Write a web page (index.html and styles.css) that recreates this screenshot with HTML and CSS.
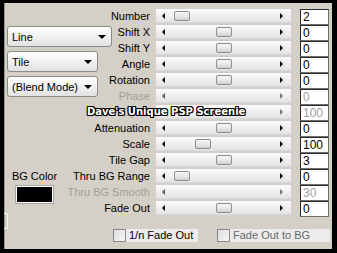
FILE: index.html
```html
<!DOCTYPE html>
<html lang="en">
<head>
    <meta charset="UTF-8">
    <title>Kaleidoscope settings</title>
    <link rel="stylesheet" href="styles.css">
</head>
<body>
    <div class="panel">
        <div class="main">
            <div class="side">
                <div class="combo wide"><span>Line</span><i class="caret"></i></div>
                <div class="combo"><span>Tile</span><i class="caret"></i></div>
                <div class="combo"><span>(Blend Mode)</span><i class="caret"></i></div>
                <div class="bgcolor">
                    <div class="bg-label">BG Color</div>
                    <div class="swatch"></div>
                </div>
                <div class="stub"></div>
            </div>
            <div class="params">
                <div class="row">
                    <div class="label">Number</div>
                    <div class="track"><i class="arr-l"></i><span class="thumb" style="left:18px"></span><i class="arr-r"></i></div>
                    <div class="value">2</div>
                </div>
                <div class="row">
                    <div class="label">Shift X</div>
                    <div class="track"><i class="arr-l"></i><span class="thumb" style="left:60px"></span><i class="arr-r"></i></div>
                    <div class="value">0</div>
                </div>
                <div class="row">
                    <div class="label">Shift Y</div>
                    <div class="track"><i class="arr-l"></i><span class="thumb" style="left:60px"></span><i class="arr-r"></i></div>
                    <div class="value">0</div>
                </div>
                <div class="row">
                    <div class="label">Angle</div>
                    <div class="track"><i class="arr-l"></i><span class="thumb" style="left:60px"></span><i class="arr-r"></i></div>
                    <div class="value">0</div>
                </div>
                <div class="row">
                    <div class="label">Rotation</div>
                    <div class="track"><i class="arr-l"></i><span class="thumb" style="left:60px"></span><i class="arr-r"></i></div>
                    <div class="value">0</div>
                </div>
                <div class="row disabled">
                    <div class="label">Phase</div>
                    <div class="track"><i class="arr-l"></i><i class="arr-r"></i></div>
                    <div class="value">0</div>
                </div>
                <div class="row disabled">
                    <div class="label">Cycle</div>
                    <div class="track"><i class="arr-l"></i><i class="arr-r"></i></div>
                    <div class="value">100</div>
                </div>
                <div class="row">
                    <div class="label">Attenuation</div>
                    <div class="track"><i class="arr-l"></i><span class="thumb" style="left:60px"></span><i class="arr-r"></i></div>
                    <div class="value">0</div>
                </div>
                <div class="row">
                    <div class="label">Scale</div>
                    <div class="track"><i class="arr-l"></i><span class="thumb" style="left:39px"></span><i class="arr-r"></i></div>
                    <div class="value">100</div>
                </div>
                <div class="row">
                    <div class="label">Tile Gap</div>
                    <div class="track"><i class="arr-l"></i><span class="thumb" style="left:60px"></span><i class="arr-r"></i></div>
                    <div class="value">3</div>
                </div>
                <div class="row">
                    <div class="label">Thru BG Range</div>
                    <div class="track"><i class="arr-l"></i><span class="thumb" style="left:18px"></span><i class="arr-r"></i></div>
                    <div class="value">0</div>
                </div>
                <div class="row disabled">
                    <div class="label">Thru BG Smooth</div>
                    <div class="track"><i class="arr-l"></i><i class="arr-r"></i></div>
                    <div class="value">30</div>
                </div>
                <div class="row">
                    <div class="label">Fade Out</div>
                    <div class="track"><i class="arr-l"></i><span class="thumb" style="left:60px"></span><i class="arr-r"></i></div>
                    <div class="value">0</div>
                </div>
            </div>
        </div>
        <div class="checks">
            <div class="check first"><span class="box"></span><span class="check-label">1/n Fade Out</span></div>
            <div class="check"><span class="box"></span><span class="check-label dim">Fade Out to BG</span></div>
        </div>
        <div class="watermark">Dave's Unique PSP Screenie</div>
    </div>
</body>
</html>
```

FILE: styles.css
```css
body {
    margin: 0;
    width: 337px;
    height: 253px;
    background: #000;
    overflow: hidden;
    font-family: "Liberation Sans", Arial, sans-serif;
    font-size: 11px;
    color: #000;
}
.panel {
    position: relative;
    box-sizing: border-box;
    margin: 3px 5px 0 4px;
    width: 328px;
    height: 246px;
    padding-top: 6px;
    background: #d4d0c8;
    border-left: 1px solid #9a968f;
}
.main {
    display: flex;
}
.side {
    width: 103px;
    padding-left: 2px;
    display: flex;
    flex-direction: column;
}
.combo {
    box-sizing: border-box;
    display: flex;
    align-items: center;
    justify-content: space-between;
    width: 91px;
    height: 21px;
    margin-top: 4px;
    padding: 0 5px 0 4px;
    border: 1px solid #8b8b8b;
    border-radius: 3px;
    background: linear-gradient(#ffffff, #f1f1f1 50%, #e1e1e1);
}
.combo.wide {
    width: 105px;
    margin-top: 17px;
}
.caret {
    width: 0;
    height: 0;
    border-style: solid;
    border-width: 4px 4px 0 4px;
    border-color: #000 transparent transparent transparent;
}
.bgcolor {
    width: 55px;
    margin-top: 72px;
    display: flex;
    flex-direction: column;
    align-items: center;
}
.bg-label {
    line-height: 14px;
}
.swatch {
    box-sizing: border-box;
    width: 37px;
    height: 17px;
    margin-top: 3px;
    background: #000;
    border: 1px solid #fff;
    outline: 1px solid #a9a59e;
}
.stub {
    box-sizing: border-box;
    width: 4px;
    height: 16px;
    margin: 10px 0 0 -3px;
    border: 1px solid #f2f2f2;
    border-left: none;
}
.params {
    display: flex;
    flex-direction: column;
}
.row {
    display: grid;
    grid-template-columns: 46px 144px 29px;
    height: 16px;
}
.label {
    display: flex;
    justify-content: flex-end;
    padding-right: 6px;
    white-space: nowrap;
    line-height: 15px;
}
.track {
    position: relative;
    box-sizing: border-box;
    width: 135px;
    height: 14px;
    display: flex;
    align-items: center;
    justify-content: space-between;
    padding: 0 8px 0 6px;
    background: linear-gradient(#fbfbfb, #efefef 55%, #e3e3e3);
    border-bottom: 1px solid #dcdcdc;
}
.arr-l {
    width: 0;
    height: 0;
    border-style: solid;
    border-width: 3px 3px 3px 0;
    border-color: transparent #000 transparent transparent;
}
.arr-r {
    width: 0;
    height: 0;
    border-style: solid;
    border-width: 3px 0 3px 3px;
    border-color: transparent transparent transparent #000;
}
.thumb {
    position: absolute;
    top: 2px;
    box-sizing: border-box;
    width: 16px;
    height: 10px;
    border: 1px solid #8e8e8e;
    border-radius: 2px;
    background: linear-gradient(#f6f6f6, #e4e4e4 60%, #d2d2d2);
}
.value {
    box-sizing: border-box;
    height: 16px;
    padding-left: 2px;
    background: #fff;
    border: 1px solid #2a2a2a;
    border-right-color: #6f6f6f;
    border-bottom-color: #6f6f6f;
    font-size: 12px;
    line-height: 14px;
}
.disabled .label,
.disabled .value {
    color: #a19e98;
}
.disabled .arr-l {
    border-right-color: #555;
}
.disabled .arr-r {
    border-left-color: #777;
}
.checks {
    display: flex;
    padding-left: 108px;
}
.check {
    display: flex;
    height: 13px;
}
.check.first {
    width: 104px;
}
.box {
    box-sizing: border-box;
    width: 13px;
    height: 13px;
    border: 1px solid #8a8a8a;
    background: linear-gradient(135deg, #dcdcdc, #f6f6f6);
}
.check-label {
    padding: 0 5px 0 3px;
    background: #ececec;
    line-height: 13px;
    white-space: nowrap;
}
.check-label.dim {
    color: #6b6b6b;
    padding-right: 20px;
}
.watermark {
    position: absolute;
    left: 82px;
    top: 104px;
    font-family: "DejaVu Sans", sans-serif;
    font-weight: bold;
    font-size: 10px;
    line-height: 10px;
    color: #fff;
    white-space: nowrap;
    text-shadow: 1px 0 #000, -1px 0 #000, 0 1px #000, 0 -1px #000,
        1px 1px #000, -1px -1px #000, 1px -1px #000, -1px 1px #000;
}
```
